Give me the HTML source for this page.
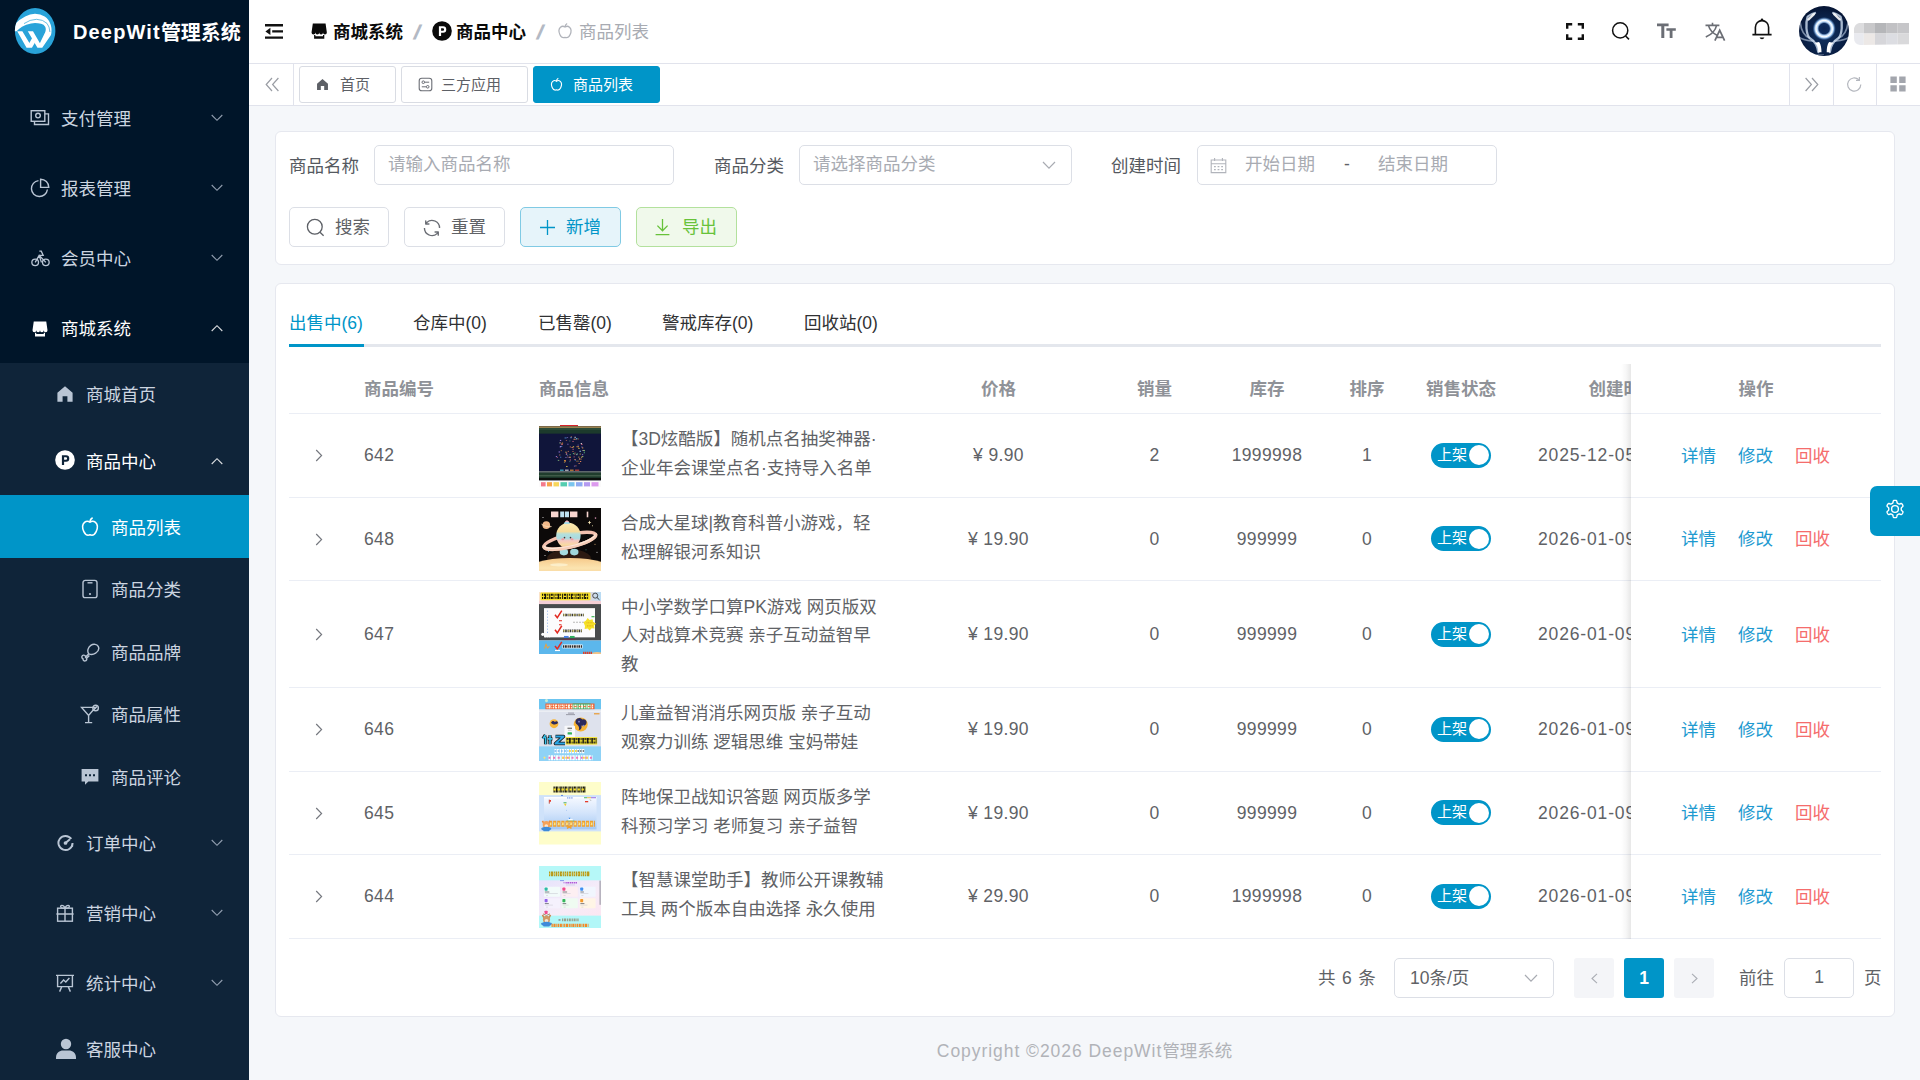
<!DOCTYPE html>
<html lang="zh-CN">
<head>
<meta charset="utf-8">
<title>DeepWit管理系统</title>
<style>
*{box-sizing:border-box;margin:0;padding:0}
html,body{width:1920px;height:1080px;overflow:hidden;background:#f5f7fa}
body{font-family:"Liberation Sans","Noto Sans CJK SC",sans-serif;font-size:17.5px;color:#606266;position:relative}
svg{display:block}
.abs{position:absolute}
/* ---------- sidebar ---------- */
#side{position:absolute;left:0;top:0;width:249px;height:1080px;background:#001529;overflow:hidden}
#logo-t{position:absolute;left:73px;top:17.500px;font-size:20px;line-height:28px;font-weight:700;color:#fff;white-space:nowrap;letter-spacing:0}
#sub{position:absolute;left:0;top:363px;width:249px;height:717px;background:#0f2439}
.mi{position:absolute;left:0;width:249px;color:#fff;font-size:17.5px;white-space:nowrap}
.mi .t{position:absolute;top:50%;margin-top:1px;transform:translateY(-50%);line-height:24px}
.mi .ic{position:absolute;top:50%;transform:translateY(-50%)}
.mi .ar{position:absolute;left:211px;top:50%;margin-top:-4px}
.mi.dim{color:#b9c5d4}
.mi.dim .t{color:#ccd5e0}
.mi.dim .ar{color:#a9b5c5}
.mi.act{background:#0095c8}

/* ---------- header ---------- */
#hdr{position:absolute;left:249px;top:0;width:1671px;height:64px;background:#fff;border-bottom:1px solid #e1e3ec}
.bc{position:absolute;top:19.800px;line-height:24px;font-size:17.5px;white-space:nowrap}
.bc.b{font-weight:700;color:#0a0a0a}
.bc.g{color:#a8abb2}
.bc.s{color:#b3b9c4;font-weight:700;font-size:20px;transform:skewX(-12deg) scaleX(1.250);transform-origin:left center}
/* ---------- tabs bar ---------- */
#tabs{position:absolute;left:249px;top:64px;width:1671px;height:42px;background:#fff;border-bottom:1px solid #e1e3ec}
.vl{position:absolute;top:0;width:1px;height:41px;background:#e1e3ec}
.tab{position:absolute;top:2px;height:37px;border:1px solid #d9dce3;border-radius:3px;background:#fff;color:#5d6066;font-size:15px;line-height:35px;white-space:nowrap}
.tab.on{background:#0095c8;border-color:#0095c8;color:#fff}
.tab svg{position:absolute;top:11px}
.tab span{position:absolute;top:0}

/* ---------- cards ---------- */
.card{position:absolute;left:275px;width:1620px;background:#fff;border:1px solid #e6e8ef;border-radius:6px}
.lbl{position:absolute;top:152.600px;line-height:26px;color:#555960;font-size:17.5px;white-space:nowrap}
.inp{position:absolute;top:145px;height:40px;border:1px solid #dcdfe6;border-radius:5px;background:#fff;color:#a8abb2;font-size:17.5px;line-height:36px;white-space:nowrap}
.inp span{position:absolute;top:0}
.btn{position:absolute;top:207px;height:40px;border:1px solid #dcdfe6;border-radius:5px;background:#fff;color:#606266;font-size:17.5px;line-height:38px;white-space:nowrap}
.btn span{position:absolute;top:0}
.btn svg{position:absolute}

/* ---------- table ---------- */
.tb{position:absolute;top:310px;line-height:26px;font-size:17.5px;color:#303133;white-space:nowrap}
.tb.on{color:#0095c8}
.th{position:absolute;top:376px;line-height:26px;font-weight:700;color:#8f9298;font-size:17.5px;white-space:nowrap;transform:translateX(-50%)}
.th.l{transform:none}
.row{position:absolute;left:289px;width:1592px;border-bottom:1px solid #ebeef5}
.c{position:absolute;top:50%;transform:translate(-50%,-50%);line-height:26px;white-space:nowrap;color:#606266;font-size:17.5px}
.c.l{transform:translateY(-50%)}
.c.n{letter-spacing:.35px}
.pt{position:absolute;left:332px;top:50%;margin-top:-1px;transform:translateY(-50%);line-height:28.750px;white-space:nowrap;color:#606266;font-size:17.5px}
.thumb{position:absolute;left:250px;top:10.500px;width:62px;height:62.500px;overflow:hidden}
.sw{position:absolute;left:1142px;top:50%;margin-top:-12.500px;width:60px;height:25px;border-radius:13px;background:#0095c8;color:#fff;font-size:15px;line-height:24px}
.sw i{position:absolute;right:2.500px;top:2.500px;width:20px;height:20px;border-radius:50%;background:#fff}
.sw span{position:absolute;left:6px;top:0}
#fix{position:absolute;left:1631px;top:364px;width:250px;height:575.200px;background:#fff}
#fix:before{content:"";position:absolute;left:-10px;top:0;width:10px;height:100%;background:linear-gradient(90deg,rgba(0,0,0,0),rgba(0,0,0,.03) 50%,rgba(0,0,0,.095))}
.op{position:absolute;line-height:26px;font-size:17.5px;white-space:nowrap;transform:translateY(-50%)}
.op.b{color:#1e9ad0}
.op.r{color:#f56c6c}
.pg{position:absolute;top:958px;height:40px;line-height:40px;font-size:17.5px;color:#606266;white-space:nowrap}
</style>
</head>
<body>
<!-- ================= SIDEBAR ================= -->
<div id="side">
  <svg class="abs" style="left:14px;top:7px" width="44" height="48" viewBox="0 0 44 48">
    <defs><clipPath id="lc"><ellipse cx="21.150" cy="24" rx="20.250" ry="23"/></clipPath></defs>
    <ellipse cx="21.150" cy="24" rx="20.250" ry="23" fill="#29a3d9"/>
    <g clip-path="url(#lc)" fill="#fff">
      <path d="M-.5 18.500Q5 12.500 11.200 9.600 16 7 21 6.800 26.500 6.800 30.700 9.600 35 12.500 36.800 18 38.200 23 37 27.900L28.400 40.600H23.300L26.100 35.800 31.300 25.100Q32.300 22 31.200 19.800 30 17.500 27 16.800 22 15.600 17 16.400 12 17.200 8 19.800 5 21.800 2.600 24.300H-.5z"/>
      <path d="M3.200 24.300h5.150L18.100 40.600h-5.700zM13.800 24.300H19L28.400 40.600h-5.100z"/>
      <path d="M12.400 40.600h5.700l2.900-5.200-2.700-4.600-2.800 5z"/>
      <path d="M10 16.600Q16 12.400 22.500 12.300 29 12.400 33 16.400 35.600 19.500 35.900 25" stroke="#29a3d9" stroke-width=".7" fill="none"/>
    </g>
  </svg>
  <div id="logo-t"><span style="letter-spacing:1.150px">DeepWit</span><span style="position:relative;top:1.500px">管理系统</span></div>
  <div id="sub"></div>
</div>
<!-- SIDE-MENU -->
<div id="menu">
<div class="mi dim" style="top:83px;height:70px"><svg class="ic" style="left:30px" width="20" height="20" viewBox="0 0 20 20"><rect x="1.2" y="2.7" width="13.6" height="10.6" stroke="currentColor" fill="none" stroke-width="1.4"/><path d="M4.5 13.5v3h14v-10.6h-3.5" stroke="currentColor" fill="none" stroke-width="1.4"/><circle cx="8" cy="7.6" r="2.3" stroke="currentColor" fill="none" stroke-width="1.4"/></svg><span class="t" style="left:61px">支付管理</span><svg class="ar" width="12" height="8" viewBox="0 0 12 8"><path d="M.7 1l5.300 5.300L11.300 1" stroke="currentColor" stroke-width="1.100" fill="none" opacity=".85"/></svg></div>
<div class="mi dim" style="top:153px;height:70px"><svg class="ic" style="left:30px" width="20" height="20" viewBox="0 0 20 20"><path d="M8.5 2.6A8 8 0 1 0 17.4 11.5" stroke="currentColor" fill="none" stroke-width="1.4"/><path d="M10.6 1.2v8.2h8.2A8.2 8.2 0 0 0 10.6 1.2z" stroke="currentColor" fill="none" stroke-width="1.4"/></svg><span class="t" style="left:61px">报表管理</span><svg class="ar" width="12" height="8" viewBox="0 0 12 8"><path d="M.7 1l5.300 5.300L11.300 1" stroke="currentColor" stroke-width="1.100" fill="none" opacity=".85"/></svg></div>
<div class="mi dim" style="top:223px;height:70px"><svg class="ic" style="left:31px" width="19" height="19" viewBox="0 0 20 20"><circle cx="4.400" cy="14.600" r="3.500" stroke="currentColor" fill="none" stroke-width="1.400"/><circle cx="15.600" cy="14.600" r="3.500" stroke="currentColor" fill="none" stroke-width="1.400"/><path d="M4.400 14.600l4.200-7.400 7 7.400M8.600 7.200h4.200l-2-4.400h-2M8.600 7.200l2.400 7.400" stroke="currentColor" fill="none" stroke-width="1.400"/></svg><span class="t" style="left:61px">会员中心</span><svg class="ar" width="12" height="8" viewBox="0 0 12 8"><path d="M.7 1l5.300 5.300L11.300 1" stroke="currentColor" stroke-width="1.100" fill="none" opacity=".85"/></svg></div>
<div class="mi " style="top:293px;height:70px"><svg class="ic" style="left:30px;margin-top:.7px" width="20" height="20" viewBox="0 0 1024 1024"><path fill="currentColor" d="M704 704h64v192H256V704h64v64h384zm188.544-152.192C894.528 559.616 896 567.616 896 576a96 96 0 1 1-192 0 96 96 0 1 1-192 0 96 96 0 1 1-192 0 96 96 0 1 1-192 0c0-8.384 1.408-16.384 3.392-24.192L192 128h640z"/></svg><span class="t" style="left:61px">商城系统</span><svg class="ar" width="12" height="8" viewBox="0 0 12 8"><path d="M.7 7l5.300-5.300L11.300 7" stroke="currentColor" stroke-width="1.100" fill="none" opacity=".85"/></svg></div>
<div class="mi dim" style="top:363px;height:62.5px"><svg class="ic" style="left:55px" width="20" height="20" viewBox="0 0 20 20"><path fill="currentColor" d="M10 2.2l7.6 6.6v9H12.4v-5.6H7.6v5.6H2.4v-9z"/></svg><span class="t" style="left:86px">商城首页</span></div>
<div class="mi " style="top:425.5px;height:70px"><svg class="ic" style="left:55px;margin-top:-.5px" width="20" height="20" viewBox="0 0 22 22"><circle cx="11" cy="11" r="10.800" fill="currentColor"/><path d="M7.6 5.8h4.6a3.5 3.5 0 0 1 0 7h-2.2v3.6H7.6zM10 8v2.6h2a1.3 1.3 0 0 0 0-2.6z" fill="#0f2439"/></svg><span class="t" style="left:86px">商品中心</span><svg class="ar" width="12" height="8" viewBox="0 0 12 8"><path d="M.7 7l5.300-5.300L11.300 7" stroke="currentColor" stroke-width="1.100" fill="none" opacity=".85"/></svg></div>
<div class="mi act" style="top:495px;height:63px"><svg class="ic" style="left:79px" width="22" height="22" viewBox="0 0 20 20"><path d="M10 5.6c1.4-1 3.4-1.2 5 .2 2 1.8 2 5.4.6 8.400-1.200 2.600-3.400 3.800-5.600 2.900-2.200.9-4.400-.3-5.600-2.900C3 11.200 3 7.600 5 5.800c1.600-1.400 3.600-1.200 5-.2z" stroke="currentColor" fill="none" stroke-width="1.4"/><path d="M10 5.600c0-1.800.8-3.200 2.400-4" stroke="currentColor" fill="none" stroke-width="1.4"/></svg><span class="t" style="left:111px">商品列表</span></div>
<div class="mi dim" style="top:558px;height:62.5px"><svg class="ic" style="left:80px" width="20" height="20" viewBox="0 0 20 20"><rect x="3" y="1.400" width="14" height="17.200" rx="2.200" stroke="currentColor" fill="none" stroke-width="1.4"/><path d="M7.500 3.800h5" stroke="currentColor" fill="none" stroke-width="1.4"/><circle cx="10" cy="15" r="1.100" fill="currentColor"/></svg><span class="t" style="left:111px">商品分类</span></div>
<div class="mi dim" style="top:620.5px;height:62.5px"><svg class="ic" style="left:80px" width="20" height="20" viewBox="0 0 20 20"><path d="M8.800 11.800c-2-2.600-.8-6.400 2-8.400 2.800-2 6.200-1.200 7.400 1 1.200 2.200 0 5-2.600 6.800-2.200 1.400-4.800 1.600-6.800.6z" stroke="currentColor" fill="none" stroke-width="1.4"/><path d="M8.800 11.800l-3.200 3.200a1.900 1.900 0 1 0-2.600 1.800 1.900 1.900 0 1 0 3.600-.6l2.800-2.800" stroke="currentColor" fill="none" stroke-width="1.4"/></svg><span class="t" style="left:111px">商品品牌</span></div>
<div class="mi dim" style="top:683px;height:62.5px"><svg class="ic" style="left:80px" width="20" height="20" viewBox="0 0 20 20"><path d="M1.600 3.400h13.800L8.600 11.400zM8.600 11.400v7M5 18.600h7.200" stroke="currentColor" fill="none" stroke-width="1.4"/><circle cx="15.600" cy="4" r="2.800" stroke="currentColor" fill="none" stroke-width="1.4"/><path d="M14 5.600l3-3" stroke="currentColor" fill="none" stroke-width="1.4"/></svg><span class="t" style="left:111px">商品属性</span></div>
<div class="mi dim" style="top:745.5px;height:62.5px"><svg class="ic" style="left:80px" width="20" height="20" viewBox="0 0 20 20"><path fill="currentColor" d="M1.600 2h16.800v12.400H8.400L5 17.800v-3.400H1.600zM5 7.200v2h2v-2zm4 0v2h2v-2zm4 0v2h2v-2z"/></svg><span class="t" style="left:111px">商品评论</span></div>
<div class="mi dim" style="top:808px;height:70px"><svg class="ic" style="left:56.500px" width="17" height="17" viewBox="0 0 20 20"><path d="M16.800 5.200A8.300 8.300 0 1 0 18.300 10" stroke="currentColor" stroke-width="2.300" fill="none"/><path d="M10 10l5.200-4.400" stroke="currentColor" stroke-width="2.300" fill="none"/><circle cx="10" cy="10" r="2.200" fill="currentColor"/><circle cx="17.900" cy="13.600" r="1.200" fill="currentColor"/></svg><span class="t" style="left:86px">订单中心</span><svg class="ar" width="12" height="8" viewBox="0 0 12 8"><path d="M.7 1l5.300 5.300L11.300 1" stroke="currentColor" stroke-width="1.100" fill="none" opacity=".85"/></svg></div>
<div class="mi dim" style="top:878px;height:70px"><svg class="ic" style="left:55px" width="20" height="20" viewBox="0 0 20 20"><rect x="2.600" y="5.200" width="14.800" height="13" stroke="currentColor" fill="none" stroke-width="1.4"/><path d="M1.400 11h17.200M10 5.200v13" stroke="currentColor" fill="none" stroke-width="1.4"/><path d="M10 5.200C8.400 1.200 4.600 2 6 4.400c.6.800 2 .8 4 .8zM10 5.200c1.600-4 5.400-3.200 4 -.8-.6.800-2 .8-4 .8z" stroke="currentColor" fill="none" stroke-width="1.4"/></svg><span class="t" style="left:86px">营销中心</span><svg class="ar" width="12" height="8" viewBox="0 0 12 8"><path d="M.7 1l5.300 5.300L11.300 1" stroke="currentColor" stroke-width="1.100" fill="none" opacity=".85"/></svg></div>
<div class="mi dim" style="top:948px;height:70px"><svg class="ic" style="left:55px" width="20" height="20" viewBox="0 0 20 20"><path d="M1 2.400h18M2.600 2.400v11.200h14.800V2.400M6.800 13.600l-2.200 5M13.200 13.600l2.200 5" stroke="currentColor" fill="none" stroke-width="1.4"/><path d="M5.400 10.400l3.200-3.400 2.200 2 3.600-4" stroke="currentColor" fill="none" stroke-width="1.4"/></svg><span class="t" style="left:86px">统计中心</span><svg class="ar" width="12" height="8" viewBox="0 0 12 8"><path d="M.7 1l5.300 5.300L11.300 1" stroke="currentColor" stroke-width="1.100" fill="none" opacity=".85"/></svg></div>
<div class="mi dim" style="top:1018px;height:62.5px"><svg class="ic" style="left:55px" width="22" height="22" viewBox="0 0 22 22"><circle cx="11" cy="6" r="5.200" fill="currentColor"/><path fill="currentColor" d="M1 19.400c0-4.600 3.600-7 7-7h6c3.400 0 7 2.400 7 7V21H1z"/></svg><span class="t" style="left:86px">客服中心</span></div>
</div>
<div id="hdr">
  <svg class="abs" style="left:16px;top:23px" width="19" height="17" viewBox="0 0 19 17"><path fill="#111" d="M0 1h18v2.400H0zM7.200 7.200H18v2.400H7.200zM0 13.400h18v2.400H0zM5.400 4.800v7.200L.4 8.400z"/></svg>
  <svg class="abs" style="left:59.800px;top:20.500px;color:#0a0a0a" width="20.400" height="20.400" viewBox="0 0 1024 1024"><path fill="currentColor" d="M704 704h64v192H256V704h64v64h384zm188.544-152.192C894.528 559.616 896 567.616 896 576a96 96 0 1 1-192 0 96 96 0 1 1-192 0 96 96 0 1 1-192 0 96 96 0 1 1-192 0c0-8.384 1.408-16.384 3.392-24.192L192 128h640z"/></svg>
  <span class="bc b" style="left:84px">商城系统</span>
  <span class="bc s" style="left:165px">/</span>
  <svg class="abs" style="left:183px;top:21px" width="20" height="20" viewBox="0 0 22 22"><circle cx="11" cy="11" r="10.800" fill="#0a0a0a"/><path d="M7.600 5.800h4.600a3.500 3.500 0 0 1 0 7h-2.200v3.600H7.600zM10 8v2.600h2a1.300 1.300 0 0 0 0-2.600z" fill="#fff"/></svg>
  <span class="bc b" style="left:207px">商品中心</span>
  <span class="bc s" style="left:288px">/</span>
  <svg class="abs" style="left:307px;top:22px;color:#b0b3ba" width="18" height="18" viewBox="0 0 20 20"><path d="M10 5.600c1.400-1 3.400-1.200 5 .2 2 1.800 2 5.400.6 8.400-1.200 2.600-3.400 3.800-5.600 2.900-2.200.9-4.400-.3-5.600-2.900C3 11.200 3 7.600 5 5.800c1.600-1.400 3.600-1.200 5-.2z" stroke="currentColor" fill="none" stroke-width="1.400"/><path d="M10 5.600c0-1.800.8-3.200 2.400-4" stroke="currentColor" fill="none" stroke-width="1.400"/></svg>
  <span class="bc g" style="left:330px">商品列表</span>
  <!-- right icons -->
  <svg class="abs" style="left:1317px;top:22.500px" width="18" height="17" viewBox="0 0 18 17"><path d="M1.200 5.800V1.200h5M11.800 1.200h5v4.600M16.800 11.200v4.600h-5M6.200 15.800h-5v-4.600" stroke="#111" stroke-width="2.400" fill="none"/></svg>
  <svg class="abs" style="left:1362px;top:21px" width="20" height="20" viewBox="0 0 20 20"><circle cx="9.200" cy="9.400" r="7.600" stroke="#111" stroke-width="1.500" fill="none"/><path d="M14.600 15l3.400 3.400" stroke="#111" stroke-width="1.500"/></svg>
  <svg class="abs" style="left:1408px;top:22px" width="20" height="18" viewBox="0 0 20 18"><path fill="#6b6e75" d="M0 1.400h11.600v2.800H7.300v11.800H4.300V4.200H0zM9.400 6.200h9.400v2.600h-3.300v7.200h-2.800V8.800H9.400z"/></svg>
  <svg class="abs" style="left:1455px;top:21px" width="22" height="21" viewBox="0 0 22 21"><path d="M1.500 4.400h13.900M8.500 1.800v2.600M12.600 4.400C11.400 9.600 7 13.800 1.800 16M4.400 4.400c1.200 4.400 4.800 8.200 9.400 10.400" stroke="#6b6e75" stroke-width="1.600" fill="none"/><path d="M10.900 19.700l4.800-10.400 4.900 10.400M12.400 16.300h6.600" stroke="#6b6e75" stroke-width="1.700" fill="none"/></svg>
  <svg class="abs" style="left:1502px;top:18px" width="22" height="23" viewBox="0 0 22 23"><path d="M11 2.600a6.600 6.600 0 0 1 6.600 6.600v7.400H4.400V9.200A6.600 6.600 0 0 1 11 2.600zM1.400 16.600h19.200" stroke="#111" stroke-width="1.600" fill="none"/><circle cx="11" cy="1.800" r="1.300" fill="#111"/><path d="M8.600 19.400a2.500 2.500 0 0 0 4.800 0z" fill="#111"/></svg>
  <!-- avatar -->
  <svg class="abs" style="left:1549px;top:5px" width="52" height="52" viewBox="0 0 52 52">
    <defs>
      <radialGradient id="ab" cx="50%" cy="58%" r="62%"><stop offset="0" stop-color="#10305f"/><stop offset=".6" stop-color="#0a2148"/><stop offset="1" stop-color="#041230"/></radialGradient>
      <radialGradient id="ar" cx="50%" cy="50%" r="50%"><stop offset="0" stop-color="#0a2450"/><stop offset=".44" stop-color="#0d2c5e"/><stop offset=".58" stop-color="#b6d6f7"/><stop offset=".7" stop-color="#fff"/><stop offset=".8" stop-color="#a9cdf3"/><stop offset="1" stop-color="#2d62a8" stop-opacity="0"/></radialGradient>
      <clipPath id="ac"><circle cx="26" cy="26" r="25"/></clipPath>
      <filter id="af" x="-20%" y="-20%" width="140%" height="140%"><feGaussianBlur stdDeviation=".55"/></filter>
    </defs>
    <circle cx="26" cy="26" r="25" fill="url(#ab)"/>
    <g clip-path="url(#ac)">
      <g filter="url(#af)" stroke="#d5e4f6" fill="none" stroke-linecap="round">
        <path d="M20.300 47C19.800 42 18 37 11.600 33 8 29 7.500 18 9.600 12 11 10 14 9 17 8" stroke-width="2.300" opacity=".78"/>
        <path d="M11.600 33C7 31.500 3.500 27.600 2.200 17.500" stroke-width="1.700" opacity=".55"/>
        <path d="M15.500 36.200C9 35.500 4 35 1 32" stroke-width="1.700" opacity=".55"/>
        <path d="M31.900 47C32.400 42 34.200 37 40.600 33 44.200 29 44.700 18 42.600 12 41.200 10 38.200 9 35.200 8" stroke-width="2.300" opacity=".78"/>
        <path d="M40.600 33C45.200 31.500 48.700 27.600 50 17.500" stroke-width="1.700" opacity=".55"/>
        <path d="M36.700 36.200C43.200 35.500 48.200 35 51.200 32" stroke-width="1.700" opacity=".55"/>
        <path d="M10.500 14.500L16 9.200M41.700 14.500L36.200 9.200" stroke="#fff" stroke-width="2.400" opacity=".9"/>
      </g>
      <circle cx="26.200" cy="23.600" r="11.700" fill="url(#ar)"/>
      <g filter="url(#af)" fill="#fff"><path d="M16.800 37.800c2.400 2 3.400 5.400 3.500 9.400h3.200c0-4.200-.6-7.600-2.400-10.200zM35.400 37.800c-2.400 2-3.400 5.400-3.500 9.400h-3.200c0-4.200.6-7.600 2.400-10.200z"/></g>
      <path d="M14 49.500h12" stroke="#5d6f8d" stroke-width="1" opacity=".7"/>
    </g>
  </svg>
  <svg class="abs" style="left:1605px;top:23px" width="55" height="22" viewBox="0 0 55 22">
    <defs><clipPath id="nm"><path d="M5 0h50v21.300L6 22Q0 21 0 15V7Q0 1.500 5 0z"/></clipPath></defs>
    <g clip-path="url(#nm)">
      <rect x="0" y="0" width="9.800" height="10.500" fill="#dcdcde"/><rect x="9.800" y="0" width="11.200" height="10.500" fill="#c8c8ca"/><rect x="21" y="0" width="11.100" height="10.500" fill="#b5b6b9"/><rect x="32.100" y="0" width="11.500" height="10.500" fill="#c1c1c4"/><rect x="43.600" y="0" width="11.400" height="10.500" fill="#c6c6c9"/>
      <rect x="0" y="10.500" width="9.800" height="11.500" fill="#e9eaef"/><rect x="9.800" y="10.500" width="11.200" height="11.500" fill="#ece8e6"/><rect x="21" y="10.500" width="11.100" height="11.500" fill="#d6d6da"/><rect x="32.100" y="10.500" width="11.500" height="11.500" fill="#dcdde2"/><rect x="43.600" y="10.500" width="11.400" height="11.500" fill="#d9d9db"/>
    </g>
  </svg>
</div>
<div id="tabs">
  <svg class="abs" style="left:16px;top:13px" width="15" height="15" viewBox="0 0 15 15"><path d="M7 1L1.200 7.500 7 14M13.400 1L7.600 7.500l5.800 6.500" stroke="#9a9da4" stroke-width="1.200" fill="none"/></svg>
  <div class="vl" style="left:44px"></div>
  <div class="tab" style="left:50px;width:97px"><svg style="left:16px" width="13" height="13" viewBox="0 0 20 20"><path fill="#5d6066" d="M10 1.500l8.400 7.300v9.700h-5.800v-6.200H7.400v6.200H1.600V8.800z"/></svg><span style="left:40px">首页</span></div>
  <div class="tab" style="left:152px;width:127px"><svg style="left:16px;top:10px" width="15" height="15" viewBox="0 0 15 15"><rect x="1.200" y="1.200" width="12.600" height="12.600" rx="2.600" stroke="#6b6e75" stroke-width="1.100" fill="none"/><path d="M6.800 5.200h4.400M3.800 9.800h4.200" stroke="#6b6e75" stroke-width="1"/><circle cx="5.300" cy="5.200" r="1.300" stroke="#6b6e75" stroke-width="1" fill="none"/><circle cx="9.700" cy="9.800" r="1.300" stroke="#6b6e75" stroke-width="1" fill="none"/></svg><span style="left:39px">三方应用</span></div>
  <div class="tab on" style="left:284px;width:127px"><svg style="left:15px;top:10px;color:#fff" width="15" height="15" viewBox="0 0 20 20"><path d="M10 5.600c1.400-1 3.400-1.200 5 .2 2 1.800 2 5.400.6 8.400-1.200 2.600-3.400 3.800-5.600 2.900-2.200.9-4.400-.3-5.600-2.900C3 11.200 3 7.600 5 5.800c1.600-1.400 3.600-1.200 5-.2z" stroke="currentColor" fill="none" stroke-width="1.500"/><path d="M10 5.600c0-1.800.8-3.200 2.400-4" stroke="currentColor" fill="none" stroke-width="1.500"/></svg><span style="left:39px">商品列表</span></div>
  <div class="vl" style="left:1540px"></div>
  <svg class="abs" style="left:1555px;top:13px" width="15" height="15" viewBox="0 0 15 15"><path d="M1.600 1l5.800 6.500L1.600 14M8 1l5.800 6.500L8 14" stroke="#9a9da4" stroke-width="1.200" fill="none"/></svg>
  <div class="vl" style="left:1584px"></div>
  <svg class="abs" style="left:1597px;top:12px" width="17" height="17" viewBox="0 0 17 17"><path d="M14.800 8.600a6.600 6.600 0 1 1-2-4.800" stroke="#b4b7be" stroke-width="1.200" fill="none"/><path d="M13.400 1v3.400H10" stroke="#b4b7be" stroke-width="1.200" fill="none"/></svg>
  <div class="vl" style="left:1627px"></div>
  <svg class="abs" style="left:1641px;top:12px" width="16" height="16" viewBox="0 0 16 16"><path fill="#a3a6ad" d="M.4.600h6.400V7H.4zM9.200.600h6.400V7H9.200zM.4 9.200h6.400v6.400H.4zM9.200 9.200h6.400v6.400H9.200z"/></svg>
</div>
<div class="card" style="top:131px;height:134px"></div>
<span class="lbl" style="left:289px">商品名称</span>
<div class="inp" style="left:374px;width:300px"><span style="left:13px">请输入商品名称</span></div>
<span class="lbl" style="left:714px">商品分类</span>
<div class="inp" style="left:799px;width:273px"><span style="left:13px">请选择商品分类</span><svg class="abs" style="left:242px;top:15px" width="14" height="9" viewBox="0 0 14 9"><path d="M1 1l6 6.200L13 1" stroke="#a8abb2" stroke-width="1.200" fill="none"/></svg></div>
<span class="lbl" style="left:1111px">创建时间</span>
<div class="inp" style="left:1197px;width:300px"><svg class="abs" style="left:12px;top:11px" width="17" height="17" viewBox="0 0 17 17"><path d="M1.200 3h14.600v12.600H1.200zM1.200 6.800h14.600M4.600 1v3M12.400 1v3" stroke="#b1b4bb" stroke-width="1.100" fill="none"/><path d="M4 9.600h1.800M7.600 9.600h1.800M11.200 9.600H13M4 12.600h1.800M7.600 12.600h1.800M11.200 12.600H13" stroke="#b1b4bb" stroke-width="1.200"/></svg><span style="left:47px">开始日期</span><span style="left:146px;color:#606266">-</span><span style="left:180px">结束日期</span></div>
<div class="btn" style="left:289px;width:100px"><svg style="left:16px;top:10px" width="19" height="19" viewBox="0 0 19 19"><circle cx="8.800" cy="8.800" r="7.400" stroke="#5d6066" stroke-width="1.300" fill="none"/><path d="M14 14.200l3.600 3.600" stroke="#5d6066" stroke-width="1.300"/></svg><span style="left:45px">搜索</span></div>
<div class="btn" style="left:404px;width:101px"><svg style="left:15.500px;top:8.500px" width="22" height="22" viewBox="0 0 1024 1024"><path fill="#6a6d74" d="M771.776 794.88A384 384 0 0 1 128 512h64a320 320 0 0 0 555.712 216.448H654.720a32 32 0 1 1 0-64h149.056a32 32 0 0 1 32 32v148.928a32 32 0 1 1-64 0v-50.560zM276.288 295.616h92.992a32 32 0 0 1 0 64H220.160a32 32 0 0 1-32-32V178.560a32 32 0 0 1 64 0v50.560A384 384 0 0 1 896.128 512h-64a320 320 0 0 0-555.776-216.384z"/></svg><span style="left:46px">重置</span></div>
<div class="btn" style="left:520px;width:101px;background:#e6f4fa;border-color:#80cae4;color:#0095c8"><svg style="left:18px;top:11px" width="17" height="17" viewBox="0 0 17 17"><path d="M8.500 1v15M1 8.500h15" stroke="#0095c8" stroke-width="1.300"/></svg><span style="left:45px">新增</span></div>
<div class="btn" style="left:636px;width:101px;background:#f0f9eb;border-color:#b3e19d;color:#67c23a"><svg style="left:17px;top:10px" width="17" height="18" viewBox="0 0 17 18"><path d="M8.500 1v11.600M3.400 7.600l5.100 5.200 5.100-5.200M1.600 16.600h13.800" stroke="#67c23a" stroke-width="1.300" fill="none"/></svg><span style="left:45px">导出</span></div>

<div class="card" style="top:283px;height:734px"></div>
<span class="tb on" style="left:289px">出售中(6)</span>
<span class="tb " style="left:413px">仓库中(0)</span>
<span class="tb " style="left:538px">已售罄(0)</span>
<span class="tb " style="left:662px">警戒库存(0)</span>
<span class="tb " style="left:804px">回收站(0)</span>
<div class="abs" style="left:289px;top:343.700px;width:1592px;height:3px;background:#e4e7ed"></div>
<div class="abs" style="left:289px;top:343.700px;width:74.500px;height:3px;background:#0095c8"></div>
<div class="abs" style="left:289px;top:413px;width:1592px;height:1px;background:#ebeef5"></div>
<span class="th l" style="left:364px">商品编号</span>
<span class="th l" style="left:539px">商品信息</span>
<span class="th" style="left:998.5px">价格</span>
<span class="th" style="left:1154.5px">销量</span>
<span class="th" style="left:1267px">库存</span>
<span class="th" style="left:1367px">排序</span>
<span class="th" style="left:1461px">销售状态</span>
<span class="th" style="left:1623.5px">创建时间</span>
<div class="row" style="top:414.0px;height:83.5px">
<svg class="abs" style="left:26px;top:50%;margin-top:-6px" width="8" height="13" viewBox="0 0 8 13"><path d="M1.200 1l5.400 5.500L1.200 12" stroke="#74777e" stroke-width="1.150" fill="none"/></svg>
<span class="c l n" style="left:75px">642</span>
<div class="thumb"><svg width="62" height="62.500" viewBox="0 0 62 62" preserveAspectRatio="none"><rect width="62" height="62" fill="#10153a"/><rect width="62" height="1" fill="#fff"/><rect x="21" width="18" height="1" fill="#d8232a"/><rect y="1.200" width="62" height="1.800" fill="#9a8350"/><rect y="3" width="62" height="5.600" fill="#1c3a2c"/><rect y="3.600" width="62" height=".7" fill="#4c6a4f"/><rect x="28.1" y="31.3" width="1.300" height=".9" fill="#f2a13a" opacity="0.55"/><rect x="32.8" y="21.8" width="1.300" height=".9" fill="#f2a13a" opacity="0.7"/><rect x="40.6" y="28.4" width="1.300" height=".9" fill="#f5d34a" opacity="0.7"/><rect x="39.2" y="31.4" width="1.300" height=".9" fill="#f5d34a" opacity="0.7"/><rect x="22.8" y="17.5" width="1.300" height=".9" fill="#f2a13a" opacity="1"/><rect x="37.6" y="28.2" width="1.300" height=".9" fill="#59c98a" opacity="0.85"/><rect x="21.0" y="31.5" width="1.300" height=".9" fill="#5aa8f0" opacity="0.7"/><rect x="40.0" y="33.0" width="1.300" height=".9" fill="#f0708a" opacity="0.85"/><rect x="41.4" y="33.4" width="1.300" height=".9" fill="#f2a13a" opacity="0.7"/><rect x="19.6" y="26.3" width="1.300" height=".9" fill="#a98af0" opacity="1"/><rect x="22.0" y="20.7" width="1.300" height=".9" fill="#5aa8f0" opacity="0.7"/><rect x="34.3" y="13.7" width="1.300" height=".9" fill="#f0708a" opacity="0.55"/><rect x="20.9" y="21.0" width="1.300" height=".9" fill="#a98af0" opacity="1"/><rect x="27.2" y="40.7" width="1.300" height=".9" fill="#f5d34a" opacity="1"/><rect x="35.4" y="33.7" width="1.300" height=".9" fill="#f28c5a" opacity="1"/><rect x="42.9" y="29.0" width="1.300" height=".9" fill="#a98af0" opacity="0.85"/><rect x="26.8" y="14.9" width="1.300" height=".9" fill="#f28c5a" opacity="0.55"/><rect x="38.8" y="13.4" width="1.300" height=".9" fill="#f28c5a" opacity="0.55"/><rect x="42.7" y="30.8" width="1.300" height=".9" fill="#f28c5a" opacity="0.85"/><rect x="27.8" y="11.9" width="1.300" height=".9" fill="#a98af0" opacity="0.55"/><rect x="39.3" y="22.7" width="1.300" height=".9" fill="#f5d34a" opacity="1"/><rect x="43.3" y="30.9" width="1.300" height=".9" fill="#59c98a" opacity="0.7"/><rect x="19.1" y="34.8" width="1.300" height=".9" fill="#f28c5a" opacity="0.55"/><rect x="35.7" y="34.4" width="1.300" height=".9" fill="#5aa8f0" opacity="0.7"/><rect x="36.8" y="13.1" width="1.300" height=".9" fill="#5aa8f0" opacity="1"/><rect x="43.4" y="24.9" width="1.300" height=".9" fill="#e8e8e8" opacity="0.7"/><rect x="34.5" y="31.2" width="1.300" height=".9" fill="#f0708a" opacity="0.7"/><rect x="44.7" y="27.1" width="1.300" height=".9" fill="#59c98a" opacity="0.85"/><rect x="29.6" y="31.7" width="1.300" height=".9" fill="#a98af0" opacity="0.85"/><rect x="43.0" y="22.3" width="1.300" height=".9" fill="#f2a13a" opacity="1"/><rect x="41.7" y="18.0" width="1.300" height=".9" fill="#e8e8e8" opacity="1"/><rect x="26.8" y="28.9" width="1.300" height=".9" fill="#e8e8e8" opacity="0.55"/><rect x="36.3" y="40.1" width="1.300" height=".9" fill="#f28c5a" opacity="0.7"/><rect x="39.9" y="33.6" width="1.300" height=".9" fill="#f5d34a" opacity="0.55"/><rect x="20.6" y="21.4" width="1.300" height=".9" fill="#a98af0" opacity="0.55"/><rect x="37.1" y="29.0" width="1.300" height=".9" fill="#e8e8e8" opacity="0.7"/><rect x="20.9" y="14.8" width="1.300" height=".9" fill="#a98af0" opacity="1"/><rect x="40.9" y="35.8" width="1.300" height=".9" fill="#f28c5a" opacity="1"/><rect x="26.3" y="26.5" width="1.300" height=".9" fill="#f5d34a" opacity="0.85"/><rect x="30.2" y="15.4" width="1.300" height=".9" fill="#59c98a" opacity="0.55"/><rect x="34.9" y="40.3" width="1.300" height=".9" fill="#a98af0" opacity="0.7"/><rect x="25.4" y="12.4" width="1.300" height=".9" fill="#5aa8f0" opacity="0.55"/><rect x="28.2" y="18.6" width="1.300" height=".9" fill="#a98af0" opacity="0.7"/><rect x="26.3" y="31.7" width="1.300" height=".9" fill="#a98af0" opacity="0.7"/><rect x="20.5" y="17.1" width="1.300" height=".9" fill="#f0708a" opacity="0.7"/><rect x="36.3" y="14.0" width="1.300" height=".9" fill="#f0708a" opacity="0.7"/><rect x="21.7" y="25.0" width="1.300" height=".9" fill="#f2a13a" opacity="0.55"/><rect x="33.4" y="15.8" width="1.300" height=".9" fill="#f0708a" opacity="0.85"/><rect x="16.8" y="30.8" width="1.300" height=".9" fill="#a98af0" opacity="0.85"/><rect x="35.1" y="28.4" width="1.300" height=".9" fill="#f28c5a" opacity="0.7"/><rect x="25.2" y="35.1" width="1.300" height=".9" fill="#f2a13a" opacity="1"/><rect x="38.4" y="21.2" width="1.300" height=".9" fill="#f5d34a" opacity="0.55"/><rect x="42.2" y="18.7" width="1.300" height=".9" fill="#f0708a" opacity="1"/><rect x="38.5" y="19.5" width="1.300" height=".9" fill="#a98af0" opacity="0.55"/><rect x="35.5" y="11.7" width="1.300" height=".9" fill="#e8e8e8" opacity="1"/><rect x="18.7" y="34.6" width="1.300" height=".9" fill="#59c98a" opacity="0.7"/><rect x="33.3" y="25.9" width="1.300" height=".9" fill="#f28c5a" opacity="0.7"/><rect x="21.8" y="18.4" width="1.300" height=".9" fill="#f28c5a" opacity="0.85"/><rect x="37.1" y="35.4" width="1.300" height=".9" fill="#f2a13a" opacity="0.55"/><rect x="34.8" y="13.6" width="1.300" height=".9" fill="#f5d34a" opacity="0.7"/><rect x="17.7" y="31.8" width="1.300" height=".9" fill="#f0708a" opacity="0.55"/><rect x="30.7" y="34.3" width="1.300" height=".9" fill="#f0708a" opacity="0.85"/><rect x="30.2" y="35.9" width="1.300" height=".9" fill="#59c98a" opacity="0.55"/><rect x="38.5" y="21.1" width="1.300" height=".9" fill="#f28c5a" opacity="1"/><rect x="37.5" y="13.3" width="1.300" height=".9" fill="#59c98a" opacity="0.7"/><rect x="28.7" y="25.7" width="1.300" height=".9" fill="#f28c5a" opacity="0.7"/><rect x="20.3" y="17.5" width="1.300" height=".9" fill="#59c98a" opacity="0.7"/><rect x="38.4" y="35.4" width="1.300" height=".9" fill="#f5d34a" opacity="0.55"/><rect x="25.7" y="35.8" width="1.300" height=".9" fill="#f28c5a" opacity="0.55"/><rect x="33.5" y="23.6" width="1.300" height=".9" fill="#f0708a" opacity="0.85"/><rect x="35.4" y="27.3" width="1.300" height=".9" fill="#f28c5a" opacity="0.55"/><rect x="31.7" y="11.4" width="1.300" height=".9" fill="#f28c5a" opacity="0.85"/><rect x="22.5" y="18.9" width="1.300" height=".9" fill="#f0708a" opacity="0.85"/><rect x="20.1" y="29.3" width="1.300" height=".9" fill="#f28c5a" opacity="0.7"/><rect x="26.3" y="12.4" width="1.300" height=".9" fill="#5aa8f0" opacity="0.7"/><rect x="33.8" y="21.2" width="1.300" height=".9" fill="#f5d34a" opacity="1"/><rect x="26.9" y="27.5" width="1.300" height=".9" fill="#f0708a" opacity="1"/><rect x="42.0" y="31.6" width="1.300" height=".9" fill="#f5d34a" opacity="0.7"/><rect x="42.2" y="21.4" width="1.300" height=".9" fill="#a98af0" opacity="0.7"/><rect x="30.7" y="31.7" width="1.300" height=".9" fill="#f28c5a" opacity="0.7"/><rect x="30.7" y="21.3" width="1.300" height=".9" fill="#f28c5a" opacity="0.7"/><rect x="44.7" y="25.1" width="1.300" height=".9" fill="#59c98a" opacity="1"/><rect x="40.5" y="25.6" width="1.300" height=".9" fill="#e8e8e8" opacity="0.7"/><rect x="27.9" y="29.6" width="1.300" height=".9" fill="#a98af0" opacity="0.55"/><rect x="25.4" y="34.8" width="1.300" height=".9" fill="#f2a13a" opacity="1"/><rect x="24.9" y="36.5" width="1.300" height=".9" fill="#f5d34a" opacity="0.55"/><rect x="44.3" y="24.7" width="1.300" height=".9" fill="#f5d34a" opacity="0.55"/><rect x="30.5" y="29.0" width="1.300" height=".9" fill="#59c98a" opacity="0.85"/><rect x="31.3" y="12.2" width="1.300" height=".9" fill="#5aa8f0" opacity="1"/><rect x="39.5" y="37.8" width="1.300" height=".9" fill="#f28c5a" opacity="0.85"/><rect x="33.9" y="28.0" width="1.300" height=".9" fill="#59c98a" opacity="1"/><rect x="37.1" y="21.1" width="1.300" height=".9" fill="#f2a13a" opacity="0.55"/><rect x="32.2" y="21.8" width="1.300" height=".9" fill="#f0708a" opacity="0.55"/><rect x="30.3" y="31.3" width="1.300" height=".9" fill="#f2a13a" opacity="0.85"/><rect x="40.7" y="25.6" width="1.300" height=".9" fill="#5aa8f0" opacity="0.7"/><path d="M21 44.800h3.600" stroke="#4fd0e0" stroke-width="1"/><path d="M26 44.800h3.600" stroke="#e8e8e8" stroke-width="1"/><path d="M31 44.800h3.600" stroke="#f2a13a" stroke-width="1"/><path d="M36 44.800h4.200" stroke="#e8503a" stroke-width="1"/><rect y="46" width="62" height="1.200" fill="#8d9a8a"/><rect y="47.200" width="62" height="5.300" fill="#1f3d2d"/><rect y="50" width="62" height=".8" fill="#56705a"/><rect y="52.500" width="62" height="2.500" fill="#0b0f0c"/><rect y="55" width="62" height="7" fill="#fbfafa"/><g stroke-width="4.200"><path d="M2 58.800h4.600" stroke="#f47a8c"/><path d="M8 58.800h5" stroke="#f6a24a"/><path d="M14.500 58.800h5.500" stroke="#f7d65a"/><path d="M21.500 58.800h6.500" stroke="#55cdb0"/><path d="M29.500 58.800h6" stroke="#79c4ee"/><path d="M37 58.800h6.500" stroke="#8eaaf2"/><path d="M45 58.800h6" stroke="#b49af0"/><path d="M52.500 58.800h7" stroke="#dc9aee"/></g></svg></div>
<div class="pt">【3D炫酷版】随机点名抽奖神器·<br>企业年会课堂点名·支持导入名单</div>
<span class="c n" style="left:709.5px">¥ 9.90</span>
<span class="c n" style="left:865.5px">2</span>
<span class="c n" style="left:978px">1999998</span>
<span class="c n" style="left:1078px">1</span>
<div class="sw"><span>上架</span><i></i></div>
<span class="c l" style="left:1249px;letter-spacing:.85px">2025-12-05</span>
</div>
<div class="row" style="top:497.5px;height:83.5px">
<svg class="abs" style="left:26px;top:50%;margin-top:-6px" width="8" height="13" viewBox="0 0 8 13"><path d="M1.200 1l5.400 5.500L1.200 12" stroke="#74777e" stroke-width="1.150" fill="none"/></svg>
<span class="c l n" style="left:75px">648</span>
<div class="thumb"><svg width="62" height="62.500" viewBox="0 0 62 62" preserveAspectRatio="none"><defs><linearGradient id="p2g" x1="0" y1="0" x2="0" y2="1"><stop offset="0" stop-color="#f6c98a"/><stop offset=".35" stop-color="#fbe4b0"/><stop offset="1" stop-color="#f3b070"/></linearGradient><linearGradient id="p2b" x1="0" y1="0" x2="0" y2="1"><stop offset="0" stop-color="#fbeab4"/><stop offset=".34" stop-color="#f6dc9a"/><stop offset=".44" stop-color="#b4e0dc"/><stop offset=".6" stop-color="#a9dbe0"/><stop offset=".7" stop-color="#f8c6c0"/><stop offset=".84" stop-color="#f7d9a6"/><stop offset="1" stop-color="#f1c27e"/></linearGradient><filter id="p2f"><feGaussianBlur stdDeviation=".5"/></filter></defs><rect width="62" height="62" fill="#0c0909"/><ellipse cx="30" cy="50" rx="22" ry="9" fill="#3a2216" opacity=".7" filter="url(#p2f)"/><ellipse cx="31" cy="64" rx="46" ry="14.500" fill="url(#p2g)"/><ellipse cx="20" cy="56.500" rx="9" ry="1.600" fill="#fdf3d2" opacity=".8"/><g transform="rotate(-13 30.800 32.500)"><ellipse cx="30.800" cy="32.500" rx="26.500" ry="6.200" fill="none" stroke="#f3bfae" stroke-width="3.400"/></g><ellipse cx="24.900" cy="43.700" rx="4.200" ry="3.300" fill="#a5dbe0"/><ellipse cx="35.300" cy="43.700" rx="4.200" ry="3.300" fill="#9fd6dc"/><ellipse cx="29.400" cy="27.400" rx="12.200" ry="12.800" fill="url(#p2b)"/><path d="M24.800 15.800c.6-3.400 5.600-3.600 6.200 0z" fill="#a8dbe6"/><path d="M26 14c.8-2 3.200-2 4 0z" fill="#f5b6c2"/><g transform="rotate(-13 30.800 32.500)"><path d="M4.300 32.500A26.500 6.200 0 0 0 57.300 32.500" fill="none" stroke="#f7cdb8" stroke-width="3.600" stroke-linecap="round"/><path d="M5 32.300A25.800 5.400 0 0 0 56.600 32.300" fill="none" stroke="#fdeadc" stroke-width="1" stroke-linecap="round"/></g><circle cx="25.500" cy="29.400" r=".8" fill="#4a3030"/><circle cx="31.500" cy="29.400" r=".8" fill="#4a3030"/><ellipse cx="23.800" cy="31" rx="1.500" ry=".9" fill="#f59aa0"/><ellipse cx="33" cy="31" rx="1.500" ry=".9" fill="#f59aa0"/><circle cx="7.300" cy="17" r="3.800" fill="#f3b98a"/><path d="M2.500 16c3 2.600 8 3 10 2.400" stroke="#f8d9b4" stroke-width=".9" fill="none"/><path d="M12 6.300h8.500M31 6.300h8" stroke="#f8d5cf" stroke-width="5.800" stroke-dasharray="7.400 1.100"/><path d="M21.200 6.300h9" stroke="#bfe2f2" stroke-width="5.800" stroke-dasharray="4 .8"/><path d="M48.500 3.600v5.600" stroke="#f8d5cf" stroke-width="1.600"/><path d="M50.500 12.500l.6 1.300 1.300.6-1.300.6-.6 1.300-.6-1.300-1.300-.6 1.300-.6z" fill="#fbe9b8"/><circle cx="56.500" cy="10" r=".8" fill="#c98aa8"/><circle cx="4" cy="9.500" r=".5" fill="#fff"/><circle cx="53.500" cy="17.500" r=".5" fill="#f5e5b0"/><circle cx="56" cy="36" r=".5" fill="#f0c080"/><circle cx="6" cy="47" r=".5" fill="#fff"/><circle cx="9.500" cy="43" r=".5" fill="#8fd0f0"/><circle cx="47" cy="41.500" r=".5" fill="#3a8a80"/><circle cx="58" cy="44" r=".5" fill="#fff"/></svg></div>
<div class="pt">合成大星球|教育科普小游戏，轻<br>松理解银河系知识</div>
<span class="c n" style="left:709.5px">¥ 19.90</span>
<span class="c n" style="left:865.5px">0</span>
<span class="c n" style="left:978px">999999</span>
<span class="c n" style="left:1078px">0</span>
<div class="sw"><span>上架</span><i></i></div>
<span class="c l" style="left:1249px;letter-spacing:.85px">2026-01-09</span>
</div>
<div class="row" style="top:581.0px;height:107.2px">
<svg class="abs" style="left:26px;top:50%;margin-top:-6px" width="8" height="13" viewBox="0 0 8 13"><path d="M1.200 1l5.400 5.500L1.200 12" stroke="#74777e" stroke-width="1.150" fill="none"/></svg>
<span class="c l n" style="left:75px">647</span>
<div class="thumb"><svg width="62" height="62.500" viewBox="0 0 62 62" preserveAspectRatio="none"><defs><linearGradient id="p3g" x1="0" y1="0" x2="1" y2="0"><stop offset="0" stop-color="#fbe3c8"/><stop offset=".7" stop-color="#f6d5d0"/><stop offset="1" stop-color="#b9dcf4"/></linearGradient></defs><rect width="62" height="62" fill="#f7d6cb"/><rect width="62" height="12" fill="url(#p3g)"/><rect x="1.500" y=".6" width="50" height="7.600" rx="1" fill="#f7e02a"/><path d="M3 4.400h47" stroke="#17150a" stroke-width="5.200" stroke-dasharray="1.100 .8 2.200 .7 .9 1"/><path d="M3 4.400h47" stroke="#f7e02a" stroke-width="1.300" stroke-dasharray="2.800 1.500"/><circle cx="56.200" cy="3.600" r="2.500" fill="none" stroke="#2a2a2a" stroke-width=".8"/><path d="M58 5.500l2.500 2.300" stroke="#2a2a2a" stroke-width=".9"/><rect y="8.800" width="62" height="3.200" fill="#f4cfd6"/><rect y="12" width="62" height="36" fill="#484b4d"/><rect x="5" y="16" width="51" height="29" fill="#fcfcfd"/><path d="M8.500 18.500v22" stroke="#6d9ae6" stroke-width="1" stroke-dasharray=".8 2.200"/><path d="M16 22.500l2.300 3 4.500-7" stroke="#e22a22" stroke-width="1.500" fill="none"/><path d="M16 37.500l2.300 3 4.500-7" stroke="#e22a22" stroke-width="1.500" fill="none"/><path d="M20 28.500h3M20 32.500h2.500" stroke="#e22a22" stroke-width="1"/><path d="M24 22.800h21" stroke="#3a3a3a" stroke-width="2.600" stroke-dasharray="1.200 .7 2 .6"/><path d="M24 22.800h21" stroke="#f3e36a" stroke-width=".8" stroke-dasharray="3 2"/><path d="M34 30h12" stroke="#b9b9b9" stroke-width="1" stroke-dasharray="2 1"/><path d="M24 38.600h19" stroke="#3a3a3a" stroke-width="2.600" stroke-dasharray="1.400 .6 1.800 .7"/><path d="M24 38.600h19" stroke="#f3e36a" stroke-width=".8" stroke-dasharray="2.500 2"/><path d="M44.500 30l2.500-1.800 1.600-2.400 2 2 3-.8.600 2.800 2.800 1.400-2 2.200.6 2.800-3-.2-2 2.200-2-2-3 .6.400-3z" fill="#f5e128"/><path d="M47.500 30.500h7M48 33.500h6" stroke="#e9b21a" stroke-width="1.200" stroke-dasharray="1 .6"/><path d="M52.500 24.500h3" stroke="#2fb24a" stroke-width="1.100"/><rect x="25" y="43.600" width="4.600" height="2" fill="#4a7de0"/><rect x="31" y="43.600" width="4.600" height="2" fill="#2fae5e"/><circle cx="3.800" cy="42" r="1.600" fill="#fff"/><path d="M6 44h6" stroke="#fff" stroke-width="1.600" stroke-dasharray="1.200 .8"/><path d="M23 47.300h14" stroke="#7a2a4a" stroke-width=".8"/><rect y="48" width="62" height="14" fill="#5cb7ec"/><path d="M16 53.500l2.300 3 4.500-7" stroke="#e22a22" stroke-width="1.500" fill="none"/><path d="M16 58h5" stroke="#fff" stroke-width="1.200"/><path d="M23.500 54h20" stroke="#fff" stroke-width="3.800"/><path d="M24 54h19" stroke="#2a2a2a" stroke-width="2.400" stroke-dasharray="1.300 .6 1.900 .7"/><path d="M5.500 56l1.500-4 1.500 3.500 2-1.500" stroke="#f0a038" stroke-width="1" fill="none"/><path d="M44 60.300h9" stroke="#e0402a" stroke-width="2.200" stroke-dasharray="1.500 .5"/><ellipse cx="58" cy="61.500" rx="5" ry="2" fill="#f2c48a"/></svg></div>
<div class="pt" style="margin-top:1.500px">中小学数学口算PK游戏 网页版双<br>人对战算术竞赛 亲子互动益智早<br>教</div>
<span class="c n" style="left:709.5px">¥ 19.90</span>
<span class="c n" style="left:865.5px">0</span>
<span class="c n" style="left:978px">999999</span>
<span class="c n" style="left:1078px">0</span>
<div class="sw"><span>上架</span><i></i></div>
<span class="c l" style="left:1249px;letter-spacing:.85px">2026-01-09</span>
</div>
<div class="row" style="top:688.2px;height:83.5px">
<svg class="abs" style="left:26px;top:50%;margin-top:-6px" width="8" height="13" viewBox="0 0 8 13"><path d="M1.200 1l5.400 5.500L1.200 12" stroke="#74777e" stroke-width="1.150" fill="none"/></svg>
<span class="c l n" style="left:75px">646</span>
<div class="thumb"><svg width="62" height="62.500" viewBox="0 0 62 62" preserveAspectRatio="none"><rect width="62" height="62" fill="#dfe3ee"/><rect width="62" height="10.300" fill="#6cc5f0"/><circle cx="7.500" cy="1.600" r="1.500" fill="#c8ecd8"/><rect x="6.500" y="4.500" width="49" height="5.800" fill="#f1592a"/><rect x="33.500" y="4.500" width="18" height="5.800" fill="#38a860"/><path d="M7.500 7.400h47" stroke="#fdf4e0" stroke-width="3.800" stroke-dasharray="1.200 .7 2.200 .8 1 .6"/><path d="M7.500 7.400h47" stroke="#f1592a" stroke-width="1" stroke-dasharray="2.600 2" opacity=".8"/><rect y="10.300" width="62" height="37" fill="#dee2ed"/><rect x="0" y="11.500" width="62" height="1.200" fill="#eef0f6"/><path d="M29 14h6M27 15.500h9" stroke="#6a6d78" stroke-width=".6"/><rect x="55" y="14" width="5.500" height="1.300" fill="#e8a040"/><circle cx="15" cy="24.500" r="4.400" fill="#f7b53a"/><path d="M12 23.500c1-2 3-2.200 3.800-.6 1.200-1.400 3-1 3.200 1-1.200 1.800-5.600 2-7-.4z" fill="#2b2a5e"/><circle cx="41.700" cy="25.300" r="7" fill="#f5b335"/><path d="M36.800 21c1.500-2.600 5-2.800 6.400-.6 2.200-1 4.600.6 4.400 3.200-.6 3-3.400 3.600-5.200 2.600.8 2.200-.4 4.400-2.600 4.600 1-2.400-.4-4.400-1.800-5.400-1.400-1-2-2.800-1.200-4.400z" fill="#2a295c"/><circle cx="40" cy="22.500" r=".9" fill="#7f86c8"/><circle cx="44.500" cy="26.500" r=".9" fill="#7f86c8"/><rect x="25.500" y="26.500" width="10.500" height="11.500" rx=".8" fill="#f7f8fb"/><path d="M28.500 29h4.500" stroke="#3c3c3c" stroke-width=".9"/><path d="M29 31h3.600" stroke="#9a9a9a" stroke-width=".5"/><rect x="28.600" y="33" width="4.400" height="2.300" rx=".4" fill="#36b45c"/><g stroke="#141414" stroke-width="3.300" fill="none"><path d="M6.400 35.600l-2.400 3.800M6.600 37.500v7.500"/><path d="M11 36v9M8.800 39.600h4.600"/></g><g stroke="#39c0ea" stroke-width="1.600" fill="none"><path d="M6.400 35.600l-2.400 3.800M6.600 37.500v7.500"/><path d="M11 36v9M8.800 39.600h4.600"/></g><path d="M16.500 37.200h8l-8 7h9.500" stroke="#141414" stroke-width="3.600" fill="none" stroke-linejoin="round"/><path d="M16.500 37.200h8l-8 7h9.500" stroke="#2aa6e6" stroke-width="1.900" fill="none" stroke-linejoin="round"/><rect x="26.700" y="37.800" width="31.500" height="7.400" fill="#f7e533"/><path d="M27.500 41.500h30" stroke="#161616" stroke-width="5.400" stroke-dasharray="1.300 .7 2.300 .8 1 .7 1.600 .6"/><path d="M27.500 41.500h30" stroke="#f7e533" stroke-width="1.200" stroke-dasharray="2.600 1.800"/><rect y="47" width="62" height="15" fill="#8fd2f6"/><path d="M15.500 51.600h30" stroke="#fff" stroke-width="4.200" stroke-dasharray="1.400 .7 2.200 .8"/><path d="M15.500 51.600h14" stroke="#79b4ea" stroke-width="1.600" stroke-dasharray="1.800 1.400"/><path d="M30 51.600h8" stroke="#f7d84a" stroke-width="1.800" stroke-dasharray="1.800 1.200"/><path d="M38.500 51.600h7" stroke="#5a5a5a" stroke-width="1.400" stroke-dasharray="1.400 1.200"/><path d="M9.500 58.300h44" stroke="#fff" stroke-width="5" stroke-dasharray="1.500 .7 2.400 .8"/><path d="M9.500 58.300h44" stroke="#ef74b6" stroke-width="2" stroke-dasharray="2 2.600"/><path d="M23 58.300h8M44 58.300h5" stroke="#f7d84a" stroke-width="2" stroke-dasharray="1.800 1.500"/><path d="M5.500 56.500l.5 1.200 1.200.5-1.200.5-.5 1.200-.5-1.200-1.200-.5 1.200-.5z" fill="#f7e27a"/></svg></div>
<div class="pt">儿童益智消消乐网页版 亲子互动<br>观察力训练 逻辑思维 宝妈带娃</div>
<span class="c n" style="left:709.5px">¥ 19.90</span>
<span class="c n" style="left:865.5px">0</span>
<span class="c n" style="left:978px">999999</span>
<span class="c n" style="left:1078px">0</span>
<div class="sw"><span>上架</span><i></i></div>
<span class="c l" style="left:1249px;letter-spacing:.85px">2026-01-09</span>
</div>
<div class="row" style="top:771.7px;height:83.5px">
<svg class="abs" style="left:26px;top:50%;margin-top:-6px" width="8" height="13" viewBox="0 0 8 13"><path d="M1.200 1l5.400 5.500L1.200 12" stroke="#74777e" stroke-width="1.150" fill="none"/></svg>
<span class="c l n" style="left:75px">645</span>
<div class="thumb"><svg width="62" height="62.500" viewBox="0 0 62 62" preserveAspectRatio="none"><defs><linearGradient id="p5g" x1="0" y1="0" x2="0" y2="1"><stop offset="0" stop-color="#f6f9ff"/><stop offset=".5" stop-color="#d3e4fb"/><stop offset="1" stop-color="#a5c9f4"/></linearGradient></defs><rect width="62" height="62" fill="#fefdca"/><path d="M14.500 7.400h32.500" stroke="#1a1808" stroke-width="6" stroke-dasharray="1.300 .7 2.300 .8 1 .6 1.600 .7"/><path d="M14.500 7.400h32.500" stroke="#f7e02a" stroke-width="2" stroke-dasharray="2.400 1.600"/><rect y="13" width="62" height="36" fill="#cfe2fa"/><rect x="5" y="15" width="52.500" height="32" fill="url(#p5g)"/><rect x="5" y="15" width="52.500" height="1.200" fill="#fff"/><path d="M22 13.300h2" stroke="#3a6ae0" stroke-width=".8"/><path d="M28 15.800h6" stroke="#3a6ae0" stroke-width=".8" stroke-dasharray="1.200 .6"/><path d="M45 15.600h3" stroke="#35b34a" stroke-width=".9"/><path d="M48 15.600h4" stroke="#e8b52a" stroke-width=".9"/><path d="M52 15.600h5" stroke="#8a5ae0" stroke-width=".9"/><path d="M10.300 17.500v4" stroke="#b5301e" stroke-width=".8"/><path d="M10.300 17.800h1.700v1.700h-1.700z" fill="#e43b2b"/><path d="M24.500 20.600h3" stroke="#35a853" stroke-width=".9"/><path d="M25 21.500l1.300 2.500 1.300-2.500z" fill="#f2cf2a"/><path d="M46 19.500h3.200" stroke="#e43b2b" stroke-width="1.300"/><path d="M51 17.300l1 1.400" stroke="#8a8a8a" stroke-width=".6"/><circle cx="27.500" cy="28" r=".4" fill="#7aa9e8"/><path d="M29.500 35.500l1 1.500 1-1.500" fill="#3f8de8"/><ellipse cx="31.500" cy="37.800" rx="2.600" ry="1.200" fill="#fff"/><path d="M27.500 38.800h8" stroke="#3aa85a" stroke-width=".9"/><path d="M10 41.500h46" stroke="#f1a12c" stroke-width="6" stroke-dasharray="3.200 .9"/><path d="M10.600 41.500h45" stroke="#fbe58a" stroke-width="2.600" stroke-dasharray="1.800 2.300"/><path d="M10 41.500h46" stroke="#e8862a" stroke-width="1" stroke-dasharray=".8 3.300" opacity=".8"/><path d="M28 43l4.500 3M32.500 43l-4.500 3" stroke="#f0a030" stroke-width="1.600"/><path d="M3.500 38.500l1.500 3M11 38.500l-1.500 3" stroke="#f08a3c" stroke-width="1.600"/><circle cx="7.300" cy="42.300" r="3.600" fill="#f5a25a"/><circle cx="7.300" cy="43.600" r="1.800" fill="#fde6cf"/><path d="M3 45.500c2.500-1.500 6-1.500 8.600 0l-1.600 3.300h-5.400z" fill="#3f8ad8"/><path d="M2.500 46l2 1.500M12 46l-2 1.500" stroke="#3f8ad8" stroke-width="1.600"/></svg></div>
<div class="pt">阵地保卫战知识答题 网页版多学<br>科预习学习 老师复习 亲子益智</div>
<span class="c n" style="left:709.5px">¥ 19.90</span>
<span class="c n" style="left:865.5px">0</span>
<span class="c n" style="left:978px">999999</span>
<span class="c n" style="left:1078px">0</span>
<div class="sw"><span>上架</span><i></i></div>
<span class="c l" style="left:1249px;letter-spacing:.85px">2026-01-09</span>
</div>
<div class="row" style="top:855.2px;height:83.5px">
<svg class="abs" style="left:26px;top:50%;margin-top:-6px" width="8" height="13" viewBox="0 0 8 13"><path d="M1.200 1l5.400 5.500L1.200 12" stroke="#74777e" stroke-width="1.150" fill="none"/></svg>
<span class="c l n" style="left:75px">644</span>
<div class="thumb"><svg width="62" height="62.500" viewBox="0 0 62 62" preserveAspectRatio="none"><defs><linearGradient id="p6g" x1="0" y1="0" x2="1" y2="1"><stop offset="0" stop-color="#e6e3fc"/><stop offset=".6" stop-color="#f6ecf8"/><stop offset="1" stop-color="#fce6f1"/></linearGradient></defs><rect width="62" height="62" fill="#b6f8f8"/><path d="M10 7.800h41" stroke="#b59a1c" stroke-width="4.600" stroke-dasharray="1.300 .7 2.300 .8 1 .6 1.600 .7"/><path d="M10 7.800h41" stroke="#e2d36a" stroke-width="1.200" stroke-dasharray="2.200 1.800" opacity=".8"/><rect y="14.200" width="62" height="35.200" fill="url(#p6g)"/><path d="M21 14.500h4" stroke="#5a7ae8" stroke-width=".7"/><path d="M24.500 16.600h1" stroke="#a050d8" stroke-width="1.200"/><path d="M26.500 16.600h11.500" stroke="#b25ad8" stroke-width="1.500" stroke-dasharray="1.300 .5 1.800 .6"/><path d="M27 18.800h9" stroke="#c9c3dc" stroke-width=".6"/><rect x="5" y="20.500" width="16" height="10" rx=".8" fill="#f2fbfa"/><rect x="22.800" y="20.500" width="16" height="10" rx=".8" fill="#fdeff2"/><rect x="40.600" y="20.500" width="16" height="10" rx=".8" fill="#f1f6fe"/><rect x="5" y="32" width="16" height="10" rx=".8" fill="#f5f1fd"/><rect x="22.800" y="32" width="16" height="10" rx=".8" fill="#effbf1"/><rect x="40.600" y="32" width="16" height="10" rx=".8" fill="#fff5e6"/><rect x="5.600" y="21.300" width="3" height="3.200" rx=".7" fill="#2dbaa8"/><rect x="23.400" y="21.300" width="3" height="3.200" rx=".7" fill="#f04c8e"/><rect x="41.200" y="21.300" width="3" height="3.200" rx=".7" fill="#3d8ef2"/><rect x="5.600" y="32.800" width="3" height="3.200" rx=".7" fill="#9160ea"/><rect x="23.400" y="32.800" width="3" height="3.200" rx=".7" fill="#35b65c"/><rect x="41.200" y="32.800" width="3" height="3.200" rx=".7" fill="#f39a2c"/><rect x="5.600" y="44.300" width="3" height="3.200" rx=".7" fill="#f04c8e"/><g stroke="#4a4a55" stroke-width=".7"><path d="M5.800 25.800h4.500M23.600 25.800h4.500M41.400 25.800h3.500M5.800 37.300h4M23.600 37.300h3.600M41.400 37.300h4"/></g><g stroke="#c4c4cf" stroke-width=".5"><path d="M5.800 27.300h13M23.600 27.300h8M41.400 27.300h8M5.800 38.800h8M23.600 38.800h6M41.400 38.800h7M7 29.300h2M24.600 29.300h2M42.400 29.300h2M7 40.800h2M24.600 40.800h2M42.400 40.800h2"/></g><rect x="60.600" y="14.500" width="1" height="24" fill="#8d8f9a"/><rect y="49.400" width="62" height="12.600" fill="#b2f7f8"/><path d="M3.500 48.500l1.500 3M11.500 48.500l-1.500 3" stroke="#c88a52" stroke-width="1.600"/><path d="M4 47.500l3.500 1.500 3.500-1.500" stroke="#8a6a3a" stroke-width=".7" fill="none"/><circle cx="7.500" cy="53" r="3.600" fill="#cf9a66"/><circle cx="7.500" cy="54.300" r="1.800" fill="#f6e6d4"/><path d="M2.800 56.500c2.800-1.600 6.600-1.600 9.400 0l-1.800 3.600H4.600z" fill="#3f8ad8"/><path d="M2.300 57l2.200 1.600M12.700 57l-2.200 1.600" stroke="#3f8ad8" stroke-width="1.600"/><path d="M19.500 53.500h2" stroke="#9a9a9a" stroke-width="1.800"/><path d="M23 53.500h17" stroke="#9aa08a" stroke-width="2.600" stroke-dasharray="1.300 .7 2 .8"/><path d="M12.500 58.800h37" stroke="#f28a28" stroke-width="3.200" stroke-dasharray="1.300 .6 2.200 .7 1 .5"/></svg></div>
<div class="pt">【智慧课堂助手】教师公开课教辅<br>工具 两个版本自由选择 永久使用</div>
<span class="c n" style="left:709.5px">¥ 29.90</span>
<span class="c n" style="left:865.5px">0</span>
<span class="c n" style="left:978px">1999998</span>
<span class="c n" style="left:1078px">0</span>
<div class="sw"><span>上架</span><i></i></div>
<span class="c l" style="left:1249px;letter-spacing:.85px">2026-01-09</span>
</div>
<div id="fix">
<span class="th" style="left:125px;top:12.00px">操作</span>
<div class="abs" style="left:0;top:49.00px;width:250px;height:1px;background:#ebeef5"></div>
<span class="op b" style="left:50px;top:91.75px">详情</span><span class="op b" style="left:107px;top:91.75px">修改</span><span class="op r" style="left:164px;top:91.75px">回收</span>
<div class="abs" style="left:0;top:132.50px;width:250px;height:1px;background:#ebeef5"></div>
<span class="op b" style="left:50px;top:175.25px">详情</span><span class="op b" style="left:107px;top:175.25px">修改</span><span class="op r" style="left:164px;top:175.25px">回收</span>
<div class="abs" style="left:0;top:216.00px;width:250px;height:1px;background:#ebeef5"></div>
<span class="op b" style="left:50px;top:270.60px">详情</span><span class="op b" style="left:107px;top:270.60px">修改</span><span class="op r" style="left:164px;top:270.60px">回收</span>
<div class="abs" style="left:0;top:323.20px;width:250px;height:1px;background:#ebeef5"></div>
<span class="op b" style="left:50px;top:365.95px">详情</span><span class="op b" style="left:107px;top:365.95px">修改</span><span class="op r" style="left:164px;top:365.95px">回收</span>
<div class="abs" style="left:0;top:406.70px;width:250px;height:1px;background:#ebeef5"></div>
<span class="op b" style="left:50px;top:449.45px">详情</span><span class="op b" style="left:107px;top:449.45px">修改</span><span class="op r" style="left:164px;top:449.45px">回收</span>
<div class="abs" style="left:0;top:490.20px;width:250px;height:1px;background:#ebeef5"></div>
<span class="op b" style="left:50px;top:532.95px">详情</span><span class="op b" style="left:107px;top:532.95px">修改</span><span class="op r" style="left:164px;top:532.95px">回收</span>
<div class="abs" style="left:0;top:573.70px;width:250px;height:1px;background:#ebeef5"></div>
</div>
<span class="pg" style="left:1318px;word-spacing:1.600px">共 6 条</span>
<div class="pg" style="left:1394px;width:160px;border:1px solid #dcdfe6;border-radius:5px;line-height:38px"><span class="abs" style="left:15px;top:0">10条/页</span><svg class="abs" style="left:129px;top:15px" width="14" height="9" viewBox="0 0 14 9"><path d="M1 1l6 6.200L13 1" stroke="#a8abb2" stroke-width="1.200" fill="none"/></svg></div>
<div class="pg" style="left:1574px;width:40px;background:#f4f5f8;border-radius:3px"><svg class="abs" style="left:16.500px;top:14.500px" width="7" height="11" viewBox="0 0 7 11"><path d="M6 .8L1 5.500 6 10.200" stroke="#aaadb4" stroke-width="1.100" fill="none"/></svg></div>
<div class="pg" style="left:1624px;width:40px;background:#0095c8;border-radius:3px;color:#fff;font-weight:700;text-align:center">1</div>
<div class="pg" style="left:1674px;width:40px;background:#f4f5f8;border-radius:3px"><svg class="abs" style="left:16.500px;top:14.500px" width="7" height="11" viewBox="0 0 7 11"><path d="M1 .8l5 4.700-5 4.700" stroke="#aaadb4" stroke-width="1.100" fill="none"/></svg></div>
<span class="pg" style="left:1739px">前往</span>
<div class="pg" style="left:1784px;width:70px;border:1px solid #dcdfe6;border-radius:5px;line-height:36px;text-align:center">1</div>
<span class="pg" style="left:1864px">页</span>
<div class="abs" style="left:1870px;top:486px;width:50px;height:50px;background:#0096c8;border-radius:7px 0 0 7px"><svg class="abs" style="left:13px;top:11px" width="24" height="24" viewBox="0 0 24 24"><path d="M12.00 3.35L12.38 3.36L12.75 3.40L13.12 3.48L13.47 3.66L13.76 4.07L13.93 4.80L14.04 5.54L14.20 5.95L14.41 6.17L14.65 6.32L14.89 6.45L15.12 6.59L15.36 6.73L15.60 6.87L15.84 6.99L16.14 7.07L16.58 7.00L17.27 6.73L17.99 6.51L18.49 6.56L18.82 6.77L19.07 7.05L19.29 7.35L19.49 7.67L19.67 8.01L19.82 8.35L19.94 8.71L19.96 9.10L19.75 9.56L19.20 10.07L18.62 10.53L18.34 10.88L18.26 11.18L18.24 11.45L18.25 11.73L18.25 12.00L18.25 12.27L18.24 12.55L18.26 12.82L18.34 13.12L18.62 13.47L19.20 13.93L19.75 14.44L19.96 14.90L19.94 15.29L19.82 15.65L19.67 15.99L19.49 16.32L19.29 16.65L19.07 16.95L18.82 17.23L18.49 17.44L17.99 17.49L17.27 17.27L16.58 17.00L16.14 16.93L15.84 17.01L15.60 17.13L15.36 17.27L15.13 17.41L14.89 17.55L14.65 17.68L14.41 17.83L14.20 18.05L14.04 18.46L13.93 19.20L13.76 19.93L13.47 20.34L13.12 20.52L12.75 20.60L12.38 20.64L12.00 20.65L11.62 20.64L11.25 20.60L10.88 20.52L10.53 20.34L10.24 19.93L10.07 19.20L9.96 18.46L9.80 18.05L9.59 17.83L9.35 17.68L9.11 17.55L8.88 17.41L8.64 17.27L8.40 17.13L8.16 17.01L7.86 16.93L7.42 17.00L6.73 17.27L6.01 17.49L5.51 17.44L5.18 17.23L4.93 16.95L4.71 16.65L4.51 16.33L4.33 15.99L4.18 15.65L4.06 15.29L4.04 14.90L4.25 14.44L4.80 13.93L5.38 13.47L5.66 13.12L5.74 12.82L5.76 12.55L5.75 12.27L5.75 12.00L5.75 11.73L5.76 11.45L5.74 11.18L5.66 10.88L5.38 10.53L4.80 10.07L4.25 9.56L4.04 9.10L4.06 8.71L4.18 8.35L4.33 8.01L4.51 7.68L4.71 7.35L4.93 7.05L5.18 6.77L5.51 6.56L6.01 6.51L6.73 6.73L7.42 7.00L7.86 7.07L8.16 6.99L8.40 6.87L8.64 6.73L8.88 6.59L9.11 6.45L9.35 6.32L9.59 6.17L9.80 5.95L9.96 5.54L10.07 4.80L10.24 4.07L10.53 3.66L10.88 3.48L11.25 3.40L11.62 3.36z" stroke="#fff" stroke-width="1.400" fill="none" stroke-linejoin="round"/><circle cx="12" cy="12" r="3.400" stroke="#fff" stroke-width="1.400" fill="none"/></svg></div>
<div class="abs" style="left:249px;top:1038px;width:1671px;text-align:center;line-height:26px;color:#b1b3b8;font-size:17.5px"><span style="letter-spacing:.95px">Copyright ©2026 DeepWit</span>管理系统</div>
</body>
</html>
